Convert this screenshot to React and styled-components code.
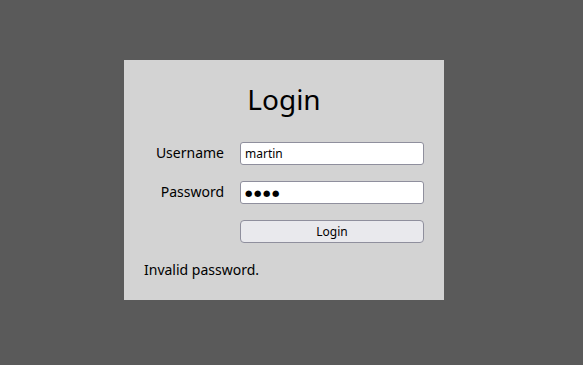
import React from "react";
import styled, { createGlobalStyle } from "styled-components";

const Global = createGlobalStyle`
  html, body { margin: 0; padding: 0; background: #5a5a5a; }
  body { font-family: "Noto Sans", sans-serif; font-size: 14px; }
`;

const Page = styled.div`
  width: 583px;
  height: 365px;
  display: flex;
  justify-content: flex-start;
  align-items: flex-start;
  padding: 60px 0 0 124px;
  box-sizing: border-box;
`;

const Panel = styled.form`
  width: 320px;
  height: 240px;
  box-sizing: border-box;
  background: #d3d3d3;
  padding: 20px 20px 0 20px;
  display: flex;
  flex-direction: column;
  color: #000;
`;

const Title = styled.h1`
  margin: 0 0 24px 0;
  font-size: 28px;
  font-weight: 400;
  line-height: 38px;
  text-align: center;
`;

const Grid = styled.div`
  display: grid;
  grid-template-columns: 80px 184px;
  column-gap: 16px;
  row-gap: 16px;
  align-items: center;
`;

const Label = styled.label`
  text-align: right;
  font-size: 14px;
  line-height: 19px;
  padding-bottom: 3px;
`;

const Input = styled.input`
  box-sizing: border-box;
  width: 184px;
  height: 23px;
  margin: 0;
  padding: 1px 4px;
  border: 1px solid #8f8f9d;
  border-radius: 3px;
  background: #fff;
  font-family: "Noto Sans", sans-serif;
  font-size: 12px;
  color: #000;
  outline: none;
`;

const MaskedInput = styled(Input)`
  font-family: "DejaVu Sans", sans-serif;
  font-size: 8.5px;
  letter-spacing: 1.6px;
  padding-left: 4px;
`;

const Button = styled.button`
  grid-column: 2;
  box-sizing: border-box;
  width: 184px;
  height: 23px;
  margin: 0;
  padding: 0;
  border: 1px solid #8f8f9d;
  border-radius: 4px;
  background: #e9e9ed;
  font-family: "Noto Sans", sans-serif;
  font-size: 12px;
  color: #000;
`;

const Message = styled.p`
  margin: 17px 0 0 0;
  font-size: 14px;
  line-height: 19px;
`;

export default function App() {
  return (
    <>
      <Global />
      <Page>
        <Panel onSubmit={(e) => e.preventDefault()}>
          <Title>Login</Title>
          <Grid>
            <Label htmlFor="u">Username</Label>
            <Input id="u" type="text" defaultValue="martin" />
            <Label htmlFor="p">Password</Label>
            <MaskedInput id="p" type="text" readOnly aria-label="password (masked)" defaultValue={"\u25CF\u25CF\u25CF\u25CF"} />
            <Button type="submit">Login</Button>
          </Grid>
          <Message>Invalid password.</Message>
        </Panel>
      </Page>
    </>
  );
}
